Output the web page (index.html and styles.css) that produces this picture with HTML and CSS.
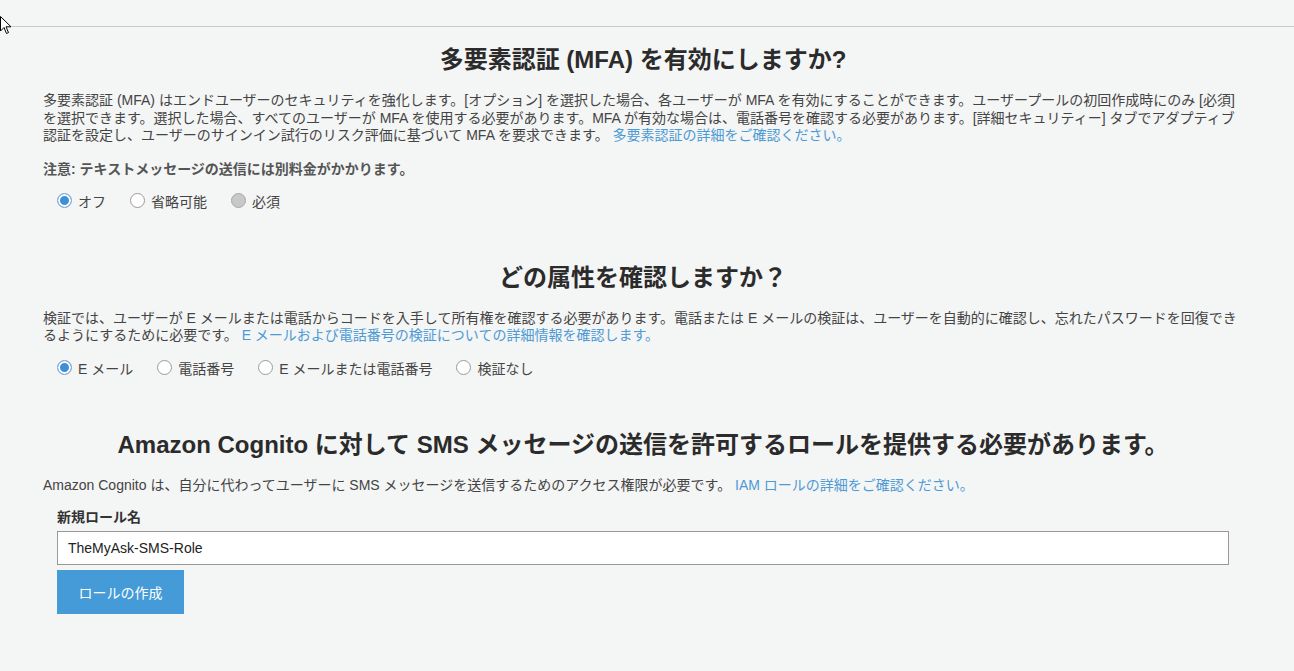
FILE: index.html
```html
<!DOCTYPE html>
<html lang="ja">
<head>
<meta charset="utf-8">
<title>Cognito MFA</title>
<link rel="stylesheet" href="styles.css">
</head>
<body>
<svg class="cursor" width="12" height="20" viewBox="0 0 12 20"><path d="M0.5 0.5 L0.5 15 L4 11.5 L6.5 17.5 L8.5 16.6 L6 10.8 L11 10.8 Z" fill="#fff" stroke="#000" stroke-width="1"/></svg>
<div class="topbar"></div>
<main class="content">
  <section class="sec">
    <h2 class="title">多要素認証 (MFA) を有効にしますか?</h2>
    <p class="text">多要素認証 (MFA) はエンドユーザーのセキュリティを強化します。[オプション] を選択した場合、各ユーザーが MFA を有効にすることができます。ユーザープールの初回作成時にのみ [必須] を選択できます。選択した場合、すべてのユーザーが MFA を使用する必要があります。MFA が有効な場合は、電話番号を確認する必要があります。[詳細セキュリティー] タブでアダプティブ認証を設定し、ユーザーのサインイン試行のリスク評価に基づいて MFA を要求できます。 <a class="link" href="#">多要素認証の詳細をご確認ください。</a></p>
    <p class="note">注意: テキストメッセージの送信には別料金がかかります。</p>
    <div class="radios">
      <label class="radio"><span class="dot on"></span>オフ</label>
      <label class="radio"><span class="dot"></span>省略可能</label>
      <label class="radio"><span class="dot off"></span>必須</label>
    </div>
  </section>
  <section class="sec">
    <h2 class="title">どの属性を確認しますか？</h2>
    <p class="text">検証では、ユーザーが E メールまたは電話からコードを入手して所有権を確認する必要があります。電話または E メールの検証は、ユーザーを自動的に確認し、忘れたパスワードを回復できるようにするために必要です。 <a class="link" href="#">E メールおよび電話番号の検証についての詳細情報を確認します。</a></p>
    <div class="radios">
      <label class="radio"><span class="dot on"></span>E メール</label>
      <label class="radio"><span class="dot"></span>電話番号</label>
      <label class="radio"><span class="dot"></span>E メールまたは電話番号</label>
      <label class="radio"><span class="dot"></span>検証なし</label>
    </div>
  </section>
  <section class="sec">
    <h2 class="title">Amazon Cognito に対して SMS メッセージの送信を許可するロールを提供する必要があります。</h2>
    <p class="text">Amazon Cognito は、自分に代わってユーザーに SMS メッセージを送信するためのアクセス権限が必要です。 <a class="link" href="#">IAM ロールの詳細をご確認ください。</a></p>
    <div class="form">
      <div class="label">新規ロール名</div>
      <div class="input">TheMyAsk-SMS-Role</div>
      <button class="btn" type="button">ロールの作成</button>
    </div>
  </section>
</main>
</body>
</html>
```
FILE: styles.css
```css
* { box-sizing: border-box; }
html, body { margin: 0; padding: 0; }
body {
  background: #f4f5f5;
  font-family: "Liberation Sans", "Noto Sans CJK JP", sans-serif;
  color: #444;
  font-size: 14px;
  width: 1294px;
  height: 671px;
  overflow: hidden;
  position: relative;
}
.cursor { position: absolute; left: 0; top: 16px; }
.topbar {
  height: 27px;
  margin-left: 10px;
  border-bottom: 1px solid #cbcbcb;
}
.content {
  width: 1200px;
  margin-left: 43px;
}
.sec { display: flex; flex-direction: column; }
.sec + .sec { margin-top: 52px; }
.title {
  margin: 18px 0 0;
  text-align: center;
  font-size: 24px;
  line-height: 30px;
  font-weight: bold;
  color: #2b2b2b;
}
.sec + .sec .title { margin-top: 0; }
.text {
  margin: 17px 0 0;
  line-height: 17.5px;
}
.link { color: #4d9ad4; text-decoration: none; }
.note {
  margin: 16px 0 0;
  line-height: 17px;
  font-weight: bold;
  color: #555;
}
.radios {
  display: flex;
  gap: 24px;
  margin: 13px 0 0 14px;
  height: 20px;
  align-items: center;
}
.radio {
  display: flex;
  align-items: center;
  gap: 6px;
  color: #444;
}
.dot {
  width: 15px;
  height: 15px;
  border-radius: 50%;
  border: 1px solid #9a9a9a;
  background: #fff;
  display: inline-block;
}
.dot.on {
  border-color: #8aaed0;
  background: #3d8fd6;
  box-shadow: inset 0 0 0 2px #fff;
}
.dot.off {
  background: #c8c8c8;
  border-color: #a8a8a8;
}
.form {
  margin: 14px 14px 0;
  display: flex;
  flex-direction: column;
  align-items: flex-start;
}
.label {
  font-weight: bold;
  color: #333;
  line-height: 18px;
}
.input {
  margin-top: 5px;
  width: 100%;
  height: 34px;
  border: 1px solid #999;
  background: #fff;
  padding: 0 10px;
  display: flex;
  align-items: center;
  font-size: 14px;
  color: #222;
}
.btn {
  margin-top: 5px;
  width: 127px;
  height: 44px;
  border: none;
  background: #449bd8;
  color: #fff;
  font-family: inherit;
  font-size: 14px;
}
```
